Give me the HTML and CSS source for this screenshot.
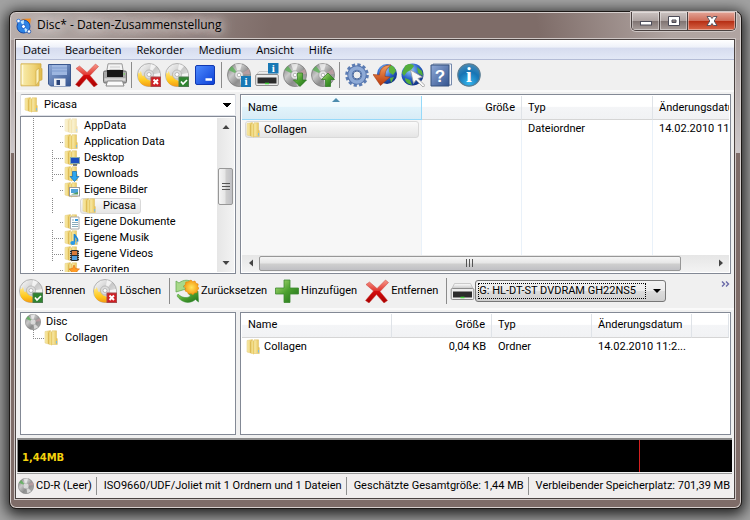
FILE: index.html
```html
<!DOCTYPE html>
<html lang="de">
<head>
<meta charset="utf-8">
<title>Disc* - Daten-Zusammenstellung</title>
<link rel="stylesheet" href="styles.css">
</head>
<body>
<svg class="sprite" aria-hidden="true">
  <defs>
    <linearGradient id="gold" x1="0" x2="1"><stop offset="0" stop-color="#f9eeb0"/><stop offset=".6" stop-color="#efd479"/><stop offset="1" stop-color="#dfb848"/></linearGradient>
    <linearGradient id="gold2" x1="0" x2="1"><stop offset="0" stop-color="#cfa638"/><stop offset=".4" stop-color="#f6e69a"/><stop offset="1" stop-color="#e9c95f"/></linearGradient>
    <linearGradient id="red" x1="0" y1="0" x2="0" y2="1"><stop offset="0" stop-color="#f79a8c"/><stop offset=".45" stop-color="#e23a33"/><stop offset=".5" stop-color="#d40d0d"/><stop offset="1" stop-color="#a80000"/></linearGradient>
    <linearGradient id="green" x1="0" y1="0" x2="1" y2="1"><stop offset="0" stop-color="#b4e07c"/><stop offset=".5" stop-color="#4ba02f"/><stop offset="1" stop-color="#1f6e1a"/></linearGradient>
    <linearGradient id="blue" x1="0" y1="0" x2="1" y2="1"><stop offset="0" stop-color="#4f8cff"/><stop offset="1" stop-color="#0b3fd6"/></linearGradient>
    <linearGradient id="steel" x1="0" y1="0" x2="1" y2="1"><stop offset="0" stop-color="#8fa9d6"/><stop offset="1" stop-color="#34548f"/></linearGradient>
    <linearGradient id="silver" x1="0" y1="0" x2="1" y2="1"><stop offset="0" stop-color="#fff"/><stop offset=".5" stop-color="#c9c9c9"/><stop offset="1" stop-color="#f4f4f4"/></linearGradient>
    <linearGradient id="metal" x1="0" y1="0" x2="0" y2="1"><stop offset="0" stop-color="#fff"/><stop offset="1" stop-color="#bcbcbc"/></linearGradient>
    <linearGradient id="greydisc" x1="0" y1="0" x2="1" y2="1"><stop offset="0" stop-color="#777"/><stop offset=".35" stop-color="#c9c9c9"/><stop offset=".6" stop-color="#8d8d8d"/><stop offset="1" stop-color="#bbb"/></linearGradient>
    <linearGradient id="flame" x1="0" y1="0" x2="0" y2="1"><stop offset="0" stop-color="#ffe88a"/><stop offset=".6" stop-color="#ffc91f"/><stop offset="1" stop-color="#f39a12"/></linearGradient>
    <radialGradient id="globe" cx=".4" cy=".3" r=".8"><stop offset="0" stop-color="#9fd0ff"/><stop offset=".5" stop-color="#2a62c8"/><stop offset="1" stop-color="#0b2470"/></radialGradient>
    <radialGradient id="infog" cx=".5" cy=".85" r=".9"><stop offset="0" stop-color="#35b6ee"/><stop offset=".55" stop-color="#1674b4"/><stop offset="1" stop-color="#4f8fb8"/></radialGradient>
    <radialGradient id="sun"><stop offset="0" stop-color="#ffe45c"/><stop offset="1" stop-color="#f79a10"/></radialGradient>
    <linearGradient id="orange" x1="0" y1="0" x2="0" y2="1"><stop offset="0" stop-color="#f5a060"/><stop offset="1" stop-color="#b93508"/></linearGradient>
  </defs>

  <symbol id="folder" viewBox="0 0 16 16">
    <path d="M1 1.500 6.500.5v14L1 13z" fill="url(#gold)" stroke="#e3ca78" stroke-width=".5"/>
    <path d="M4.500 2.500 8 1.500v14L4.500 14z" fill="url(#gold2)"/>
    <path d="M8 .8h4.500v7l.8 1v5.700H8z" fill="url(#gold)" stroke="#dcbf63" stroke-width=".5"/>
    <path d="M12.500 11v2.500" stroke="#7bbce6"/>
  </symbol>
  <symbol id="open-folder" viewBox="0 0 24 24">
    <path d="M2 .8h20v4l1 1v11l-3 1v5H2z" fill="url(#gold)" stroke="#cfa943" stroke-width=".8"/>
    <path d="M17 7.500 20 5v13l-3 4.500z" fill="#fbf1bd" stroke="#cfa943" stroke-width=".7"/>
    <path d="M3.500 2v19" stroke="#fff8d8" stroke-width="1.500"/>
  </symbol>
  <symbol id="save" viewBox="0 0 24 24">
    <path d="M1.500 1.500h22v21.500h-20l-2-2z" fill="url(#steel)" stroke="#3b588f"/>
    <path d="M5 2h15v10H5z" fill="#9db6e0"/><path d="M5 5h15M5 8h15" stroke="#7e9ccf"/>
    <path d="M7 15.500h11.500V23H7z" fill="#eceff4"/><path d="M9.500 17h3.500v5H9.500z" fill="#2b4478"/>
  </symbol>
  <symbol id="cross" viewBox="0 0 24 24">
    <path d="M4.500 3 12 9.500 20.500 1l3 2.500-8.500 9 7.500 9-3.500 2.500-7.500-8.500L4 24l-3.500-2.500 8-9.500L1 5.500z" fill="url(#red)" stroke="#c9403a" stroke-width=".5"/>
  </symbol>
  <symbol id="printer" viewBox="0 0 24 24">
    <path d="M5 .8h14l1.500 9h-17z" fill="#f3f3f3" stroke="#9a9a9a"/><path d="M7 4h10M6.500 6.500h11" stroke="#ccc"/>
    <rect x=".5" y="8" width="23" height="12" rx="1.500" fill="#a8a8a8" stroke="#6d6d6d"/>
    <path d="M4 7h16v7H4z" fill="#171717"/><path d="M1.500 16.500h21" stroke="#d8d8d8" stroke-width="2.500"/>
    <path d="M4.500 18h15l1.500 5H3z" fill="#fafafa" stroke="#888"/><path d="M20.500 11h1.500" stroke="#6d4"/>
  </symbol>
  <symbol id="burn-disc" viewBox="0 0 24 24">
    <circle cx="12" cy="12" r="11.500" fill="url(#silver)" stroke="#a3a3a3" stroke-width=".8"/>
    <path d="M1 9c1 2 2 2 2.500-1 2 2 .5 5 3 5 1-1 .5-2 1-3 2 3 1 6 4 7 1 .5 3 0 4 6-7 2-14-2-14.500-9z" fill="url(#flame)"/>
    <path d="M12 12 14 1l5 2zM12 12l11-2v5z" fill="#fff" opacity=".7"/>
    <circle cx="12" cy="11.500" r="4.500" fill="#ddd" stroke="#aaa" stroke-width=".7"/><circle cx="12" cy="11.500" r="2" fill="#fff" stroke="#999" stroke-width=".6"/>
  </symbol>
  <symbol id="badge-x" viewBox="0 0 24 24"><rect x="14" y="14" width="9.500" height="9.500" fill="#cf1f24" stroke="#a8494b"/><path d="m16.500 16.500 4.500 4.500m0-4.500-4.500 4.500" stroke="#fff" stroke-width="2"/></symbol>
  <symbol id="badge-ok" viewBox="0 0 24 24"><rect x="14" y="14" width="9.500" height="9.500" fill="#2f8530" stroke="#4d7a4f"/><path d="m16 18.500 2 2.500 4-4" fill="none" stroke="#fff" stroke-width="1.700"/></symbol>
  <symbol id="burn-x" viewBox="0 0 24 24"><use href="#burn-disc"/><use href="#badge-x"/></symbol>
  <symbol id="burn-ok" viewBox="0 0 24 24"><use href="#burn-disc"/><use href="#badge-ok"/></symbol>
  <symbol id="blank" viewBox="0 0 24 24"><rect x="2.500" y="2.500" width="19" height="19" rx="1.500" fill="url(#blue)" stroke="#1138b0"/><path d="M12.500 16.500H19" stroke="#fff" stroke-width="2.500"/></symbol>
  <symbol id="disc" viewBox="0 0 24 24">
    <circle cx="12" cy="12" r="11.500" fill="url(#greydisc)" stroke="#7b7b7b" stroke-width=".8"/>
    <path d="M12 12 8 1l7-.5zM12 12l8 8-6 3z" fill="#fff" opacity=".6"/>
    <path d="M12 12 1.500 7 5 3z" fill="#55b052" opacity=".75"/><path d="m12 12 10-6 1 5z" fill="#c9a3a8" opacity=".7"/>
    <circle cx="12" cy="12" r="4.200" fill="#e8e8e8" stroke="#999" stroke-width=".7"/><circle cx="12" cy="12" r="1.800" fill="#fff" stroke="#888" stroke-width=".6"/>
  </symbol>
  <symbol id="drive" viewBox="0 0 24 24">
    <path d="M4 4.500h16l3 6H1z" fill="url(#metal)" stroke="#b7b7b7" stroke-width=".7"/>
    <rect x=".7" y="9.500" width="22.600" height="11" rx="1.200" fill="#ededed" stroke="#8c8c8c"/>
    <path d="M2.500 12.500h19v6h-19z" fill="#2c2c2c"/><path d="M10 18.500h4" stroke="#45d43c" stroke-width="1.500"/>
  </symbol>
  <symbol id="disc-down" viewBox="0 0 24 24"><use href="#disc"/><path d="M14.500 10h5v7h4L17 23.500 10.500 17h4z" fill="url(#green)" stroke="#2a7a20" stroke-width=".7"/></symbol>
  <symbol id="disc-up" viewBox="0 0 24 24"><use href="#disc"/><path d="M14.500 23.500h5v-7h4L17 10l-6.500 6.500h4z" fill="url(#green)" stroke="#2a7a20" stroke-width=".7"/></symbol>
  <symbol id="gear" viewBox="0 0 24 24">
    <circle cx="12" cy="12" r="10.300" fill="none" stroke="#5c7db4" stroke-width="3" stroke-dasharray="3.200 2.194"/>
    <circle cx="12" cy="12" r="7" fill="none" stroke="#5675ad" stroke-width="5.500"/><circle cx="12" cy="12" r="7" fill="none" stroke="#8eaad6" stroke-width="3.500"/>
    <circle cx="12" cy="12" r="4" fill="#efefef" stroke="#4c6b9f"/>
  </symbol>
  <symbol id="globe-back" viewBox="0 0 24 24">
    <circle cx="14" cy="11" r="10" fill="url(#globe)"/><path d="M16 2c4 0 6 3 7 6l-3 4-4-3zM17 15l4-1-3 6z" fill="#5cb43c"/>
    <path d="M18 2C10 2 7 6 6.500 12L0 11.500 7.500 22.500 17 14l-5-.5C12 8 14 5 18 2z" fill="url(#orange)" stroke="#a33a10" stroke-width=".6"/>
  </symbol>
  <symbol id="globe-cursor" viewBox="0 0 24 24">
    <circle cx="11.500" cy="11.500" r="11" fill="url(#globe)"/>
    <path d="M4 3c4-3 8-2 9 0l-3 4-4 2-3 4-2-3zM16 4l5 4 1 5-5-3zM4 15l5 2 2 5C7 21 4 19 4 15z" fill="#54ae3b"/>
    <path d="m9.500 7 12 7-4.500 1.500 7 7-2 1.500-7-7-2.500 3.500z" fill="#f8f8f8" stroke="#9a9a9a" stroke-width=".8"/>
  </symbol>
  <symbol id="reset" viewBox="0 0 24 24">
    <path d="M1 2 4 4c5-4 10-3 13-1l-2 4c-3-1-5-1-7 .5L11 10 1 13z" fill="#a9d98a" stroke="#5aa545" stroke-width=".7"/>
    <path d="m23.500 23-3-2.500C15 25 7 24.500 2 17l1-2c4 4 9 4.500 12.500 2L13 14l10-2z" fill="url(#green)" stroke="#318f30" stroke-width=".5"/>
    <path d="m16 1 1.800 1.700L20 2l.8 2.200L23.200 5l-.5 2.500 1.300 2-1.800 1.700-.2 2.300-2.500.4-1.500 1.900-2-1.300-2.500.6-1-2.100-2.400-1L10.600 9 9 7.200l1.500-1.900L10.800 3l2.400-.2z" fill="url(#sun)" stroke="#e38408" stroke-width=".6"/>
  </symbol>
  <symbol id="plus" viewBox="0 0 24 24"><path d="M9 1h6v8h8.500v6H15v8.500H9V15H.5V9H9z" fill="url(#green)" stroke="#3c8a30" stroke-width=".8"/></symbol>
  <symbol id="app" viewBox="0 0 16 16">
    <path d="M5 1 15 .5 14 7z" fill="#f28a1c"/><path d="m7 2 5 1-1 3z" fill="#ffd955"/>
    <circle cx="7.500" cy="8.500" r="6.500" fill="#2b83e6" stroke="#1148a8"/><path d="M7.500 8.500 4 3l4-1zM7.500 8.500l5 4-3 2z" fill="#bfe5ff"/>
    <circle cx="7.500" cy="8.500" r="2" fill="#fff" stroke="#1c5cc4"/>
    <circle cx="2.500" cy="3" r="1.800" fill="#fff" stroke="#3d7edb"/><circle cx="13" cy="13.500" r="1.800" fill="#fff" stroke="#2f62b8"/>
  </symbol>
  <symbol id="o-desktop" viewBox="0 0 16 16"><rect x="6.500" y="7.500" width="9" height="6" fill="#1b4fc0" stroke="#8aa"/><path d="M9 15h4" stroke="#456" stroke-width="1.500"/></symbol>
  <symbol id="o-down" viewBox="0 0 16 16"><path d="M8.500 5.500h4v5H15l-4.500 5-4.500-5h2.500z" fill="#2da6ee" stroke="#1468b0" stroke-width=".7"/></symbol>
  <symbol id="o-image" viewBox="0 0 16 16"><rect x="5.500" y="5.500" width="10" height="8.500" fill="#fff" stroke="#999"/><path d="M7 7h7v4H7z" fill="#4fa3da"/><path d="M7 12.500h7V10l-3 1z" fill="#4f9c63"/></symbol>
  <symbol id="o-doc" viewBox="0 0 16 16"><path d="M6.500 3h8.500v12H6.500z" fill="#fff" stroke="#aaa"/><path d="M8 6h2M8 8.500h6M8 10.500h6M8 12.500h6" stroke="#8ab"/><path d="M11 6h3" stroke="#39d" stroke-width="2"/></symbol>
  <symbol id="o-music" viewBox="0 0 16 16"><path d="M10.500 4v8M10.500 4.500c1 3 4 3 3 7" fill="none" stroke="#1c86d8" stroke-width="1.700"/><ellipse cx="8.800" cy="13" rx="2.500" ry="2" fill="#2a9ae8"/></symbol>
  <symbol id="o-video" viewBox="0 0 16 16"><path d="M6 4h9v11H6z" fill="#2b2b2b"/><path d="M8 5h5v4H8z" fill="#d97a3a"/><path d="M8 10h5v4H8z" fill="#4f9fe0"/><path d="M6.700 4v11M14.300 4v11" stroke="#ddd" stroke-dasharray="1 1"/></symbol>
  <symbol id="o-star" viewBox="0 0 16 16"><path d="m10 3 1.500 3.500 4 .5-3 2.500 1 4-3.500-2-3.500 2 1-4L5 7l3.500-.5z" fill="#ff9b24" stroke="#e06c10" stroke-width=".6"/></symbol>
</svg>

<main class="window">
  <header class="titlebar">
    <svg class="icon16"><use href="#app"/></svg>
    <h1 class="title">Disc* - Daten-Zusammenstellung</h1>
    <div class="window-buttons">
      <button type="button" class="win-btn" aria-label="Minimieren"><svg viewBox="0 0 14 12"><rect x="1.500" y="6.500" width="11" height="3.500" fill="#fff" stroke="#4c4c58"/></svg></button>
      <button type="button" class="win-btn" aria-label="Maximieren"><svg viewBox="0 0 14 12"><path d="M1.500 1.500h11v9h-11zM5 5v2.500h4V5z" fill="#fff" fill-rule="evenodd" stroke="#4c4c58"/></svg></button>
      <button type="button" class="win-btn win-close" aria-label="Schließen"><svg viewBox="0 0 14 12"><path d="M2 1.500h3.500L7 3.500l1.500-2H12L9.200 6l2.800 4.500H8.500L7 8.500l-1.500 2H2L4.800 6z" fill="#fff" stroke="#4c4c58" stroke-width=".9"/></svg></button>
    </div>
  </header>

  <div class="client">
    <nav class="menubar">
      <button type="button">Datei</button>
      <button type="button">Bearbeiten</button>
      <button type="button">Rekorder</button>
      <button type="button">Medium</button>
      <button type="button">Ansicht</button>
      <button type="button">Hilfe</button>
    </nav>

    <div class="toolbar main-tools" role="toolbar">
      <button type="button" aria-label="Öffnen"><svg><use href="#open-folder"/></svg></button>
      <button type="button" aria-label="Speichern"><svg><use href="#save"/></svg></button>
      <button type="button" aria-label="Löschen"><svg><use href="#cross"/></svg></button>
      <button type="button" aria-label="Drucken"><svg><use href="#printer"/></svg></button>
      <span class="divider"></span>
      <button type="button" aria-label="Medium löschen"><svg><use href="#burn-x"/></svg></button>
      <button type="button" aria-label="Medium brennen"><svg><use href="#burn-ok"/></svg></button>
      <button type="button" aria-label="Leeren"><svg><use href="#blank"/></svg></button>
      <span class="divider"></span>
      <button type="button" aria-label="Medieninfo"><svg viewBox="0 0 24 24"><use href="#disc"/><rect x="14" y="13" width="10" height="11" fill="#1878b5"/><text x="19" y="22" class="glyph badge-glyph">i</text></svg></button>
      <button type="button" aria-label="Laufwerksinfo"><svg viewBox="0 0 24 24">
        <path d="M4 8.500h16l3 4H1z" fill="url(#metal)" stroke="#b7b7b7" stroke-width=".7"/>
        <rect x=".7" y="11.500" width="22.600" height="11" rx="1.200" fill="#ededed" stroke="#8c8c8c"/>
        <path d="M2.500 14.500h19v6h-19z" fill="#2c2c2c"/><path d="M10 20.500h4" stroke="#45d43c" stroke-width="1.500"/>
        <rect x="13" width="10.500" height="10.500" fill="#1878b5"/><text x="18.300" y="9" class="glyph badge-glyph">i</text>
      </svg></button>
      <button type="button" aria-label="Einlesen"><svg><use href="#disc-down"/></svg></button>
      <button type="button" aria-label="Auswerfen"><svg><use href="#disc-up"/></svg></button>
      <span class="divider"></span>
      <button type="button" aria-label="Einstellungen"><svg><use href="#gear"/></svg></button>
      <button type="button" aria-label="Aktualisieren"><svg><use href="#globe-back"/></svg></button>
      <button type="button" aria-label="Webseite"><svg><use href="#globe-cursor"/></svg></button>
      <button type="button" aria-label="Hilfe"><svg viewBox="0 0 24 24"><path d="M4 1h18.500v21H4z" fill="#f3f5f9" stroke="#7589ac"/><path d="M2 2h18v21H2z" fill="url(#steel)" stroke="#36527f"/><text x="11" y="18.500" class="glyph help-glyph">?</text></svg></button>
      <button type="button" aria-label="Info"><svg viewBox="0 0 24 24"><circle cx="12" cy="12" r="11.200" fill="url(#infog)" stroke="#5b7d92" stroke-width="1.200"/><text x="12" y="19" class="glyph info-glyph">i</text></svg></button>
    </div>

    <section class="panes source">
      <div class="source-nav">
        <label class="path">
          <svg class="icon16"><use href="#folder"/></svg>
          <select aria-label="Ordner"><option>Picasa</option></select>
        </label>
        <div class="box tree-box">
          <ul class="tree">
            <li class="faded"><svg class="icon16"><use href="#folder"/></svg><span>AppData</span></li>
            <li><svg class="icon16"><use href="#folder"/></svg><span>Application Data</span></li>
            <li class="branch"><svg class="icon16"><use href="#folder"/><use href="#o-desktop"/></svg><span>Desktop</span></li>
            <li class="branch"><svg class="icon16"><use href="#folder"/><use href="#o-down"/></svg><span>Downloads</span></li>
            <li><svg class="icon16"><use href="#folder"/><use href="#o-image"/></svg><span>Eigene Bilder</span></li>
            <li class="child"><div class="selected"><svg class="icon16"><use href="#folder"/></svg><span>Picasa</span></div></li>
            <li><svg class="icon16"><use href="#folder"/><use href="#o-doc"/></svg><span>Eigene Dokumente</span></li>
            <li class="branch"><svg class="icon16"><use href="#folder"/><use href="#o-music"/></svg><span>Eigene Musik</span></li>
            <li class="branch"><svg class="icon16"><use href="#folder"/><use href="#o-video"/></svg><span>Eigene Videos</span></li>
            <li><svg class="icon16"><use href="#folder"/><use href="#o-star"/></svg><span>Favoriten</span></li>
          </ul>
          <div class="scroll-v">
            <button type="button" class="arrow" aria-label="Nach oben"><svg viewBox="0 0 8 8"><path d="M4 2 7.500 6h-7z"/></svg></button>
            <span class="track-before"></span>
            <span class="thumb"><svg viewBox="0 0 8 8"><path d="M0 .5h8M0 3.500h8M0 6.500h8"/></svg></span>
            <span class="track-after"></span>
            <button type="button" class="arrow" aria-label="Nach unten"><svg viewBox="0 0 8 8"><path d="M4 6 7.500 2h-7z"/></svg></button>
          </div>
        </div>
      </div>
      <div class="box list-box">
        <div class="table-wrap">
          <table class="files source-files">
            <colgroup><col class="w-name"><col class="w-100"><col class="w-type"><col></colgroup>
            <thead><tr><th class="sorted">Name<svg class="sort" viewBox="0 0 8 4"><path d="m4 0 4 4H0z"/></svg></th><th class="num">Größe</th><th>Typ</th><th>Änderungsdatum</th></tr></thead>
            <tbody>
              <tr><td class="name"><div class="item selected"><svg class="icon16"><use href="#folder"/></svg><span>Collagen</span></div></td><td class="num"></td><td>Dateiordner</td><td>14.02.2010 11:23</td></tr>
              <tr class="rest"><td class="name"></td><td></td><td></td><td></td></tr>
            </tbody>
          </table>
        </div>
        <div class="scroll-h">
          <button type="button" class="arrow" aria-label="Nach links"><svg viewBox="0 0 8 8"><path d="M2 4 6 .5v7z"/></svg></button>
          <span class="thumb"><svg viewBox="0 0 8 8"><path d="M.5 0v8M3.500 0v8M6.500 0v8"/></svg></span>
          <span class="track-after"></span>
          <button type="button" class="arrow" aria-label="Nach rechts"><svg viewBox="0 0 8 8"><path d="M6 4 2 .5v7z"/></svg></button>
        </div>
      </div>
    </section>

    <div class="toolbar disc-tools" role="toolbar">
      <button type="button"><svg><use href="#burn-ok"/></svg>Brennen</button>
      <button type="button"><svg><use href="#burn-x"/></svg>Löschen</button>
      <span class="divider"></span>
      <button type="button"><svg><use href="#reset"/></svg>Zurücksetzen</button>
      <button type="button"><svg><use href="#plus"/></svg>Hinzufügen</button>
      <button type="button"><svg><use href="#cross"/></svg>Entfernen</button>
      <span class="divider"></span>
      <label class="drive">
        <svg class="drive-icon"><use href="#drive"/></svg>
        <span class="combo"><select aria-label="Laufwerk"><option>G: HL-DT-ST DVDRAM GH22NS5</option></select><svg class="combo-arrow" viewBox="0 0 8 4"><path d="M0 0h8L4 4z"/></svg></span>
      </label>
      <button type="button" class="more" aria-label="Mehr"><svg viewBox="0 0 9 6"><path d="m1 .5 2.500 2.500L1 5.500M5 .5 7.500 3 5 5.500"/></svg></button>
    </div>

    <section class="panes target">
      <div class="box">
        <ul class="disc-tree">
          <li><svg class="icon16"><use href="#disc"/></svg><span>Disc</span></li>
          <li class="leaf"><svg class="icon16"><use href="#folder"/></svg><span>Collagen</span></li>
        </ul>
      </div>
      <div class="box list-box">
        <table class="files target-files">
          <colgroup><col class="w-name"><col class="w-100"><col class="w-100"><col class="w-100"><col></colgroup>
          <thead><tr><th>Name</th><th class="num">Größe</th><th>Typ</th><th>Änderungsdatum</th><th></th></tr></thead>
          <tbody><tr><td class="name"><div class="item"><svg class="icon16"><use href="#folder"/></svg><span>Collagen</span></div></td><td class="num">0,04 KB</td><td>Ordner</td><td>14.02.2010 11:2...</td><td></td></tr></tbody>
        </table>
      </div>
    </section>

    <div class="capacity"><span class="used">1,44MB</span><span class="limit"></span></div>

    <footer class="status">
      <span><svg class="icon16"><use href="#disc"/></svg>CD-R (Leer)</span>
      <span>ISO9660/UDF/Joliet mit 1 Ordnern und 1 Dateien</span>
      <span>Geschätzte Gesamtgröße: 1,44 MB</span>
      <span>Verbleibender Speicherplatz: 701,39 MB</span>
    </footer>
  </div>
</main>
</body>
</html>
```
FILE: styles.css
```css
* { box-sizing: border-box; }

body {
  margin: 0;
  min-height: 100vh;
  display: flex;
  padding: 11px 8px 11px 9px;
  background: #a2a2a2;
  color: #000;
  font: 11px/16px Roboto, "Liberation Sans", Arial, sans-serif;
  overflow: hidden;
}

ul { margin: 0; padding: 0; list-style: none; }
button, select { font: inherit; color: inherit; margin: 0; padding: 0; border: 0; background: none; }
select { appearance: none; outline: 0; }
svg { display: block; flex: none; }

.sprite { position: absolute; width: 0; height: 0; }
.icon16 { width: 16px; height: 16px; }
.glyph { fill: #fff; font-weight: bold; text-anchor: middle; }
.badge-glyph { font-family: "Liberation Serif", serif; font-size: 11px; }
.info-glyph { font-family: "Liberation Serif", serif; font-size: 21px; }
.help-glyph { font-family: "Liberation Sans", sans-serif; font-size: 17px; }

/* Window frame */
.window {
  flex: 1;
  min-width: 0;
  display: flex;
  flex-direction: column;
  padding: 0 6px 9px 5px;
  border: 1px solid #1c1816;
  border-radius: 7px;
  background:
    linear-gradient(100deg, rgba(205, 198, 196, .75) 0, rgba(205, 198, 196, 0) 36%) 0 0 / 100% 28px no-repeat,
    linear-gradient(80deg, rgba(185, 174, 171, 0) 72%, rgba(185, 174, 171, .85) 90%) 0 0 / 100% 28px no-repeat,
    linear-gradient(#a79b99, #cdc8ca) 0 28px / 7px 113px no-repeat,
    linear-gradient(#a79b99, #cdc8ca) 100% 28px / 7px 113px no-repeat,
    #7e6c68;
  box-shadow: inset 0 0 0 1px #d6cfcd, 0 3px 14px 3px rgba(0, 0, 0, .8);
}
.titlebar { display: flex; height: 27px; padding-top: 4px; }
.titlebar .icon16 { margin: 2px 5px 0 1px; }
.title {
  margin: 0;
  font: 12px/18px "Open Sans", "Noto Sans", sans-serif;
  text-shadow: 0 0 8px #e6dedc, 0 0 12px #e6dedc, 0 0 16px #e6dedc;
}
.window-buttons {
  display: flex;
  height: 19px;
  margin: -4px -1px 0 auto;
  border: 1px solid #4a4140;
  border-top: 0;
  border-radius: 0 0 5px 5px;
  box-shadow: 0 0 0 1px #cfc7c5;
  overflow: hidden;
}
.win-btn {
  display: grid;
  place-items: center;
  width: 28px;
  border-right: 1px solid #4a4140;
  background: linear-gradient(#cbc3c1, #ada3a1 48%, #7f7371 50%, #a89e9b);
  box-shadow: inset 0 0 0 1px rgba(255, 255, 255, .4);
}
.win-btn svg { width: 14px; height: 12px; }
.win-close {
  width: 47px;
  border-right: 0;
  background: linear-gradient(#e3a597, #cf6d59 48%, #b52c12 50%, #d8684a);
}

.client {
  flex: 1;
  min-height: 0;
  display: flex;
  flex-direction: column;
  border: 1px solid #4b4342;
  box-shadow: 0 0 0 1px #cfc7c5;
  background: #f0f0f0;
}

/* Menu and toolbars */
.menubar {
  display: flex;
  gap: 15px;
  height: 20px;
  padding: 0 7px;
  border-bottom: 1px solid #b4bcd6;
  background: linear-gradient(#fff, #eef1f9 38%, #d6dcef 42%, #e2e8f6);
  font: 11px/19px "Open Sans", "Noto Sans", sans-serif;
}
.toolbar { display: flex; align-items: center; padding: 0 1px; border-bottom: 2px solid #fafafa; }
.toolbar button { display: flex; align-items: center; flex: none; }
.toolbar button > svg { width: 24px; height: 24px; }
.divider { flex: none; width: 1px; height: 26px; background: #8b8b8b; }
.main-tools { height: 32px; }
.main-tools button { width: 28px; padding-left: 2px; }
.main-tools .divider { margin: 0 3px 0 2px; }
.disc-tools { height: 36px; }
.disc-tools button { gap: 2px; padding: 0 6px 0 2px; }
.disc-tools .divider { margin: 0 3px 0 2px; }
.drive { display: flex; align-items: center; }
.drive-icon { width: 25px; height: 24px; }
.combo {
  display: flex;
  align-items: center;
  height: 22px;
  padding: 2px 4px 2px 2px;
  gap: 7px;
  border: 1px solid #777;
  border-radius: 3px;
  background: linear-gradient(#f3f3f3, #ebebeb 48%, #dcdcdc 52%, #cfcfcf);
}
.combo select { width: 168px; height: 16px; border: 1px dotted #000; line-height: 14px; }
.combo-arrow { width: 8px; height: 4px; }
.toolbar .more { align-self: flex-start; margin: 7px 0 0 auto; padding: 0 3px 0 0; }
.toolbar .more svg { width: 9px; height: 6px; fill: none; stroke: #6a6aa8; stroke-width: 1.4; }

/* Panes */
.panes { display: grid; grid-template-columns: 216px minmax(0, 1fr); gap: 4px; padding: 2px 3px 0 4px; min-height: 0; }
.source { flex: 184 0 0; grid-template-rows: minmax(0, 1fr); }
.target { flex: 126 0 0; grid-template-rows: minmax(0, 1fr); }
.box { border: 1px solid #838995; background: #fff; min-height: 0; overflow: hidden; }
.source-nav { display: flex; flex-direction: column; min-height: 0; }
.path { display: flex; align-items: center; height: 22px; flex: none; padding: 0 4px 0 3px; gap: 4px; border: 1px solid #dcdfe6; border-top-color: #abadb3; border-radius: 2px; background: #fff; }
.path select {
  flex: 1;
  height: 18px;
  background:
    linear-gradient(45deg, transparent 50%, #000 0) calc(100% - 4px) 50% / 4px 4px no-repeat,
    linear-gradient(315deg, transparent 50%, #000 0) 100% 50% / 4px 4px no-repeat;
}
.tree-box { display: flex; flex: 1; padding: 1px; }
.tree { flex: 1; background: repeating-linear-gradient(#8a8a8a 0 1px, transparent 1px 2px) 11px 0 / 1px 100% no-repeat; overflow: hidden; }
.tree li {
  display: flex;
  gap: 4px;
  height: 16px;
  padding-left: 42px;
  background: repeating-linear-gradient(90deg, #8a8a8a 0 1px, transparent 1px 2px) 38px 8px / 4px 1px no-repeat;
}
.tree .branch {
  background:
    repeating-linear-gradient(90deg, #8a8a8a 0 1px, transparent 1px 2px) 30px 8px / 12px 1px no-repeat,
    repeating-linear-gradient(#8a8a8a 0 1px, transparent 1px 2px) 30px 0 / 1px 16px no-repeat;
}
.tree .child { padding-left: 58px; background: repeating-linear-gradient(#8a8a8a 0 1px, transparent 1px 2px) 30px 0 / 1px 16px no-repeat; }
.child .selected { display: flex; gap: 5px; padding: 0 4px 0 1px; }
.faded svg { opacity: .5; }
.selected { border: 1px solid #d9d9d9; border-radius: 3px; background: linear-gradient(#fafafa, #e5e5e5); line-height: 14px; }
.selected .icon16 { margin-top: -1px; }

/* Scroll bars */
.arrow { display: grid; place-items: center; flex: none; width: 17px; height: 17px; }
.arrow svg { width: 8px; height: 8px; fill: #444; }
.thumb { display: grid; place-items: center; border: 1px solid #979797; border-radius: 2px; }
.thumb svg { width: 8px; height: 8px; stroke: #555; }
.scroll-v { display: flex; flex-direction: column; width: 17px; flex: none; background: linear-gradient(90deg, #e6e6e6, #f3f3f3); }
.scroll-v .track-before { flex: 34; }
.scroll-v .thumb { flex: 35; margin: 0 1px; background: linear-gradient(90deg, #f5f5f5, #e5e5e5 48%, #cfcfcf 52%, #c0c0c4); }
.scroll-v .track-after { flex: 51; }
.scroll-h { display: flex; height: 17px; flex: none; background: linear-gradient(#e6e6e6, #f3f3f3); }
.scroll-h .thumb { flex: 420; margin: 1px 0; background: linear-gradient(#f5f5f5, #e5e5e5 48%, #cfcfcf 52%, #c0c0c4); }
.scroll-h .track-after { flex: 31; }

/* File lists */
.list-box { display: flex; flex-direction: column; padding: 1px; }
.table-wrap { flex: 1; min-height: 0; display: grid; overflow: hidden; }
.files { table-layout: fixed; border-spacing: 0; width: 100%; }
.w-100 { width: 100px; }
.source-files { min-width: 560px; }
.source-files .w-name { width: 180px; }
.w-type { width: 131px; }
.target-files .w-name { width: 150px; }
.files th, .files td { padding: 0 6px; text-align: left; font-weight: normal; white-space: nowrap; overflow: hidden; }
.files .num { text-align: right; }
.files th {
  position: relative;
  height: 24px;
  border-right: 1px solid #dfe3e8;
  border-bottom: 1px solid #d5d5d5;
  background: linear-gradient(#fff 45%, #f4f5f7 50%, #f1f2f4);
}
.files .sorted { border-color: #96d9f9; background: linear-gradient(#f2fafd 45%, #e1f3fb 50%, #d8ecf6); }
.sort { position: absolute; top: 2px; left: 50%; width: 8px; height: 4px; fill: #4d8cae; }
.files td { height: 18px; }
.files td.name { padding: 0 2px 0 3px; }
.item { display: flex; gap: 2px; height: 18px; line-height: 18px; padding: 0 1px; }
.item .icon16 { margin-top: 1px; }
.item.selected { height: 17px; line-height: 15px; padding: 0; }
.item.selected .icon16 { margin-top: 0; }
.source-files td { border-right: 1px solid #e9f1f9; }
.source-files td.name { background: #f7f7f7; }
.files .rest td { height: auto; }

.disc-tree { padding: 1px 4px; }
.disc-tree li { display: flex; gap: 5px; height: 16px; }
.disc-tree .leaf {
  padding-left: 19px;
  background:
    repeating-linear-gradient(#8a8a8a 0 1px, transparent 1px 2px) 8px 0 / 1px 8px no-repeat,
    repeating-linear-gradient(90deg, #8a8a8a 0 1px, transparent 1px 2px) 8px 8px / 11px 1px no-repeat;
}

/* Capacity gauge */
.capacity {
  position: relative;
  display: flex;
  align-items: center;
  flex: none;
  height: 34px;
  margin: 3px 2px 0 1px;
  padding: 4px 4px 0;
  border: solid #8a8a8a;
  border-width: 2px 0 0 1px;
  background: #000;
}
.used { color: #f4d30e; font: bold 10px/16px "DejaVu Sans", Verdana, sans-serif; }
.limit { position: absolute; top: 0; bottom: 0; left: 87%; width: 1px; background: #d42020; }

/* Status line */
.status {
  display: flex;
  align-items: center;
  flex: none;
  height: 25px;
  margin: 1px 2px 0 1px;
  padding-left: 1px;
  border-top: 1px solid #9a9a9a;
  background: #f1eeee;
  white-space: nowrap;
}
.status span { display: flex; align-items: center; gap: 2px; line-height: 18px; }
.status span + span { margin-left: 4px; padding-left: 7px; border-left: 1px solid #8f8f8f; }
```
